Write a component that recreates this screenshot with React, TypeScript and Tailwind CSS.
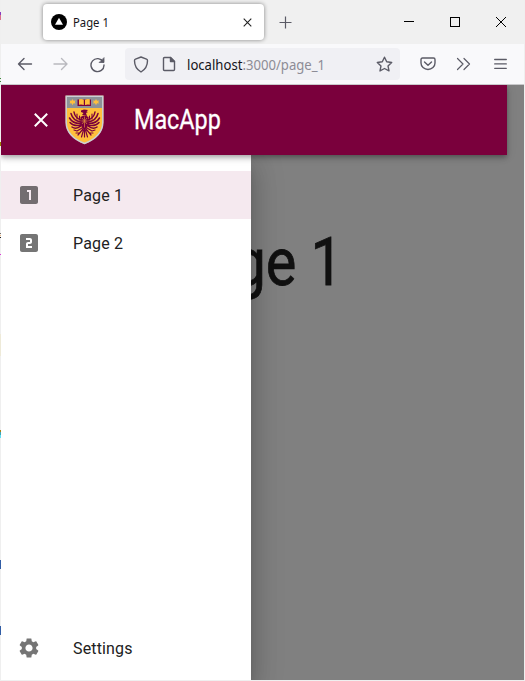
import React from "react";

const iconLine = { fill: "none", stroke: "#5b5b66", strokeWidth: 1.4, strokeLinecap: "round", strokeLinejoin: "round" } as const;

function EdgeStrip() {
  return (
    <svg className="absolute left-0 top-0" width="1" height="681" shapeRendering="crispEdges">
      <rect width="1" height="681" fill="#efefef" />
      <rect y="12" width="1" height="3" fill="#8a3cc0" />
      <rect y="15" width="1" height="5" fill="#d9708c" />
      <rect y="78" width="1" height="1" fill="#3c8a3c" />
      <rect y="81" width="1" height="1" fill="#3c8a3c" />
      <rect y="142" width="1" height="4" fill="#9a8200" />
      <rect y="233" width="1" height="1" fill="#77706a" />
      <rect y="235" width="1" height="1" fill="#f4b880" />
      <rect y="237" width="1" height="1" fill="#222222" />
      <rect y="254" width="1" height="1" fill="#dc39d8" />
      <rect y="334" width="1" height="22" fill="#eeead8" />
      <rect y="430" width="1" height="2" fill="#a78416" />
      <rect y="432" width="1" height="3" fill="#3ca9b8" />
      <rect y="435" width="1" height="3" fill="#63dff5" />
      <rect y="560" width="1" height="9" fill="#315da5" />
      <rect y="626" width="1" height="9" fill="#315da5" />
    </svg>
  );
}

function Crest() {
  return (
    <svg width="39" height="50" viewBox="0 0 39 50" className="shrink-0">
      <path d="M.7.7h37.600v26.500c0 10.500-8 17.500-18.800 21.900C8.700 44.700.7 37.700.7 27.200z" fill="#ffbf3c" />
      <path d="M1 1h37v12H1z" fill="#8d9298" />
      <path d="M1.200 1.200h36.600v26c0 10-7.500 17-18.300 21.300C8.700 44.200 1.200 37.200 1.200 27.200z" fill="none" stroke="#c9ced6" strokeWidth="1.500" />
      <path d="M7.500 4l1 1.800 2-.2-.7 1.400.7 1.500-2-.2-1 1.900-1-1.900-2 .2.700-1.500-.7-1.400 2 .2zM31 4l1 1.800 2-.2-.7 1.400.7 1.500-2-.2-1 1.900-1-1.900-2 .2.700-1.500-.7-1.400 2 .2z" fill="#ffbf3c" />
      <path d="M12.500 4.500h13.500v6.500H12.500z" fill="#7a003c" />
      <path d="M14 4.200q3-.8 4.800.5v5.300q-2-.8-4.800-.3zM20 4.700q2-1.300 4.800-.5v5.500q-2.800-.5-4.800.3z" fill="#ffbf3c" />
      <g fill="none" stroke="#7a003c" strokeLinecap="round">
        <path d="M16 25Q10 23 9 17M16 27Q8 26 6 18.500M16 28.500Q8 29 4.500 23M16 30Q9 32 5 27.500M16 31Q11 35 7 32" strokeWidth="1.500" />
        <path d="M23 25Q29 23 30 17M23 27Q31 26 33 18.500M23 28.500Q31 29 34.500 23M23 30Q30 32 34 27.500M23 31Q28 35 32 32" strokeWidth="1.500" />
        <path d="M12 24v-5M14.500 25v-4M27 24v-5M24.500 25v-4" strokeWidth="1.100" />
        <path d="M17 33l-5 3M18 34l-5 6M18.500 35l-2 7M19.500 34v8M20.500 35l2 7M21 34l5 6M22 33l5 3M9 35l3 1M30 35l-3 1M11 38h3M25 38h3" strokeWidth="1.200" />
      </g>
      <path d="M16 15.500l3-1 4 .5-1.500 1.500L23 17l-2 1 1 3-5-1 1.500-2L16 17z" fill="#7a003c" />
      <path d="M15.500 22q4-2.500 8 0v7q-1 4-4 6-3-2-4-6z" fill="#7a003c" />
      <path d="M19.500 21.500v11M16.500 26h6M17 23l5 6M22 23l-5 6" stroke="#dc8f3b" strokeWidth=".7" />
    </svg>
  );
}

function TabStrip() {
  return (
    <div className="flex h-[44px] items-start bg-[#f0f0f0] pl-[42px]">
      <div className="mt-1 flex h-9 w-[221px] items-center rounded bg-white pl-[8px] shadow-[0_0_4px_rgba(0,0,0,0.45)]">
        <svg width="16" height="16" viewBox="0 0 16 16">
          <circle cx="8" cy="8" r="8" fill="#000" />
          <path d="M8 3.800l4 7H4z" fill="#fff" />
        </svg>
        <span className="ml-[6px] mt-px w-[164px] origin-left scale-x-[0.94] text-[12px] leading-4 text-[#15141a]">Page 1</span>
        <svg className="ml-[6px]" width="9" height="9" viewBox="0 0 9 9">
          <path d="M.7.7l7.600 7.600M8.300.7L.7 8.300" stroke="#222" strokeWidth="1.100" />
        </svg>
      </div>
      <svg className="ml-[15px] mt-[16px]" width="13" height="13" viewBox="0 0 13 13">
        <path d="M6.500.500v12M.500 6.500h12" stroke="#5b5b66" strokeWidth="1.200" />
      </svg>
      <svg className="ml-[111px] mt-[16px]" width="103" height="12" viewBox="0 0 103 12" fill="none" stroke="#000" strokeWidth="1">
        <path d="M1 5.500h10" shapeRendering="crispEdges" />
        <path d="M47.500 1.500h9v9h-9z" shapeRendering="crispEdges" />
        <path d="M93 1l10 10M103 1L93 11" />
      </svg>
    </div>
  );
}

function Toolbar() {
  return (
    <div className="flex h-[41px] items-center border-b border-[#c9c9cb] bg-[#f9f9fb] pl-[16px]">
      <svg width="16" height="14" viewBox="0 0 16 14" {...iconLine}><path d="M14.500 7H1.500M7 1.500L1.500 7 7 12.500" /></svg>
      <svg className="ml-[20px] opacity-40" width="16" height="14" viewBox="0 0 16 14" {...iconLine}><path d="M1 7h13M8.500 1.500L14 7l-5.500 5.500" /></svg>
      <svg className="ml-[20px]" width="17" height="17" viewBox="0 0 17 17" {...iconLine}>
        <path d="M14.200 6A6.500 6.500 0 1 0 15 9" />
        <path d="M15 2v4.500h-4.500z" fill="#5b5b66" strokeWidth=".8" />
      </svg>
      <div className="ml-[19px] flex h-8 w-[275px] items-center rounded bg-[#f0f0f4] pl-[8px]">
        <svg width="16" height="17" viewBox="0 0 16 17" {...iconLine}><path d="M8 1l5.500 2.200q1 .4 1 1.500C14.500 10 13 13 8 16 3 13 1.500 10 1.500 4.700q0-1.100 1-1.500z" /></svg>
        <svg className="ml-[13px]" width="14" height="16" viewBox="0 0 14 16" {...iconLine}>
          <path d="M2.500 1.500h6l4 4v8q0 1-1 1h-9q-1 0-1-1v-11q0-1 1-1z" />
          <path d="M8.500 1.500v4h4z" fill="#5b5b66" />
        </svg>
        <span className="ml-[11px] mt-[2px] w-[140px] whitespace-nowrap text-[14px] leading-5 text-[#15141a]">
          <span className="inline-block origin-left scale-x-[0.937]">localhost<span className="text-[#8d8c96]">:3000/page_1</span></span>
        </span>
        <svg className="ml-[49px]" width="17" height="17" viewBox="0 0 17 17" {...iconLine}><path d="M8.500 1.200l2.200 4.600 5 .7-3.700 3.400 1 5-4.500-2.400L4 14.900l1-5L1.300 6.500l5-.7z" /></svg>
      </div>
      <svg className="ml-[20px]" width="16" height="14" viewBox="0 0 16 14" {...iconLine}>
        <path d="M2.500 1h11Q15 1 15 2.500V6a7 6.500 0 0 1-14 0V2.500Q1 1 2.500 1zM4.500 5L8 8.300 11.500 5" />
      </svg>
      <svg className="ml-[20px]" width="15" height="14" viewBox="0 0 15 14" {...iconLine} strokeWidth={1.2}><path d="M1.500 1.500L7 7l-5.500 5.500M8 1.500L13.500 7 8 12.500" /></svg>
      <svg className="ml-[23px]" width="13" height="12" viewBox="0 0 13 12" {...iconLine} strokeWidth={1.3}><path d="M.7 1.500h11.600M.7 5.900h11.600M.7 10.300h11.600" /></svg>
    </div>
  );
}

function NavItem({ label, icon, selected = false }: { label: string; icon: string; selected?: boolean }) {
  return (
    <a className={`flex h-12 items-center pl-4 ${selected ? "bg-[#f5e9ef]" : ""}`}>
      <svg className="shrink-0" width="24" height="24" viewBox="0 0 24 24" fill={selected ? "#736d70" : "#757575"}><path d={icon} /></svg>
      <span className="ml-8 mt-[2px] text-[16px] leading-6 tracking-[0.15px] text-[#212121]">{label}</span>
    </a>
  );
}

const ONE = "M19 3H5c-1.100 0-2 .9-2 2v14c0 1.100.9 2 2 2h14c1.100 0 2-.9 2-2V5c0-1.100-.9-2-2-2zm-5 14h-2V9h-2V7h4v10z";
const TWO = "M19 3H5c-1.100 0-2 .9-2 2v14c0 1.100.9 2 2 2h14c1.100 0 2-.9 2-2V5c0-1.100-.9-2-2-2zm-4 8c0 1.110-.9 2-2 2h-2v2h4v2H9v-4c0-1.110.9-2 2-2h2V9H9V7h4c1.100 0 2 .89 2 2v2z";
const GEAR = "M19.140 12.940c.04-.3.06-.61.06-.94 0-.32-.02-.64-.07-.94l2.030-1.580c.18-.14.23-.41.12-.61l-1.920-3.320c-.12-.22-.37-.29-.59-.22l-2.390.96c-.5-.38-1.030-.7-1.620-.94l-.36-2.540c-.04-.24-.24-.41-.48-.41h-3.840c-.24 0-.43.17-.47.41l-.36 2.540c-.59.24-1.130.57-1.620.94l-2.390-.96c-.22-.08-.47 0-.59.22L2.740 8.870c-.12.21-.08.47.12.61l2.030 1.580c-.05.3-.09.63-.09.94s.02.64.07.94l-2.030 1.580c-.18.14-.23.41-.12.61l1.920 3.320c.12.22.37.29.59.22l2.390-.96c.5.38 1.030.7 1.620.94l.36 2.540c.05.24.24.41.48.41h3.840c.24 0 .44-.17.47-.41l.36-2.540c.59-.24 1.130-.56 1.620-.94l2.390.96c.22.08.47 0 .59-.22l1.920-3.320c.12-.22.07-.47-.12-.61l-2.010-1.580zM12 15.600c-1.980 0-3.600-1.620-3.600-3.600s1.620-3.600 3.600-3.600 3.600 1.620 3.600 3.600-1.620 3.600-3.600 3.600z";

export default function App() {
  return (
    <div className="relative h-[681px] w-[525px] overflow-hidden bg-[#efefef] pb-px pl-px pr-px">
      <div className="flex h-full flex-col font-['Noto_Sans',sans-serif]">
        <TabStrip />
        <Toolbar />
        <div className="flex min-h-0 flex-1 flex-col overflow-hidden bg-[#808080] font-['Roboto',sans-serif]">
          <header className="relative z-20 flex h-[70px] w-[506px] shrink-0 items-center bg-[#7a003c] pl-[33px] shadow-[0_2px_4px_-1px_rgba(0,0,0,0.2),0_4px_5px_0_rgba(0,0,0,0.14),0_1px_10px_0_rgba(0,0,0,0.12)]">
            <svg width="14" height="14" viewBox="0 0 14 14"><path d="M.8.8l12.400 12.400M13.200.8L.8 13.200" stroke="#fff" strokeWidth="2" /></svg>
            <div className="ml-[17px]"><Crest /></div>
            <span className="ml-[30px] origin-left scale-x-[0.865] text-[27px] leading-8 text-white [-webkit-text-stroke:0.3px_white]">MacApp</span>
          </header>
          <div className="flex min-h-0 flex-1">
            <aside className="relative z-10 flex w-[250px] shrink-0 flex-col justify-between bg-white pb-2 pt-4 shadow-[0_8px_10px_-5px_rgba(0,0,0,0.2),0_16px_24px_2px_rgba(0,0,0,0.14),0_6px_30px_5px_rgba(0,0,0,0.12)]">
              <nav>
                <NavItem label="Page 1" icon={ONE} selected />
                <NavItem label="Page 2" icon={TWO} />
              </nav>
              <NavItem label="Settings" icon={GEAR} />
            </aside>
            <main className="min-w-0 flex-1 pt-[67px]">
              <h1 className="-ml-[85px] w-max origin-left scale-x-[0.86] text-[67px] leading-[80px] text-[#111111] [-webkit-text-stroke:0.8px_#111111]">Page 1</h1>
            </main>
          </div>
        </div>
      </div>
      <EdgeStrip />
    </div>
  );
}
